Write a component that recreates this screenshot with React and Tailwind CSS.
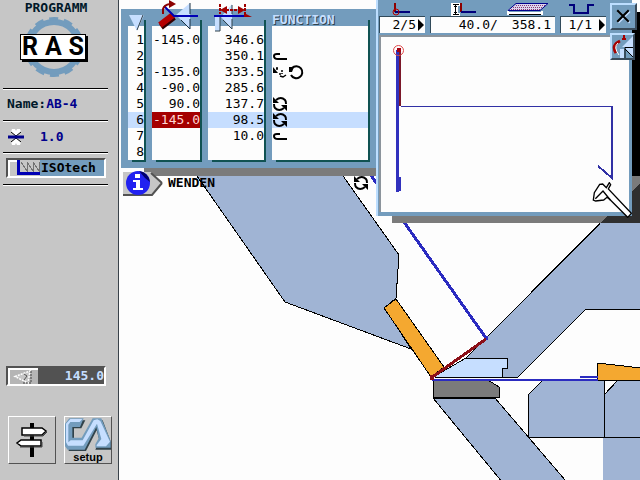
import React, { useState } from 'react'

const rows = [
  { n: 1, angle: '-145.0', stop: '346.6', fn: [] },
  { n: 2, angle: '', stop: '350.1', fn: ['hook'] },
  { n: 3, angle: '-135.0', stop: '333.5', fn: ['flip', 'rotate'] },
  { n: 4, angle: '-90.0', stop: '285.6', fn: [] },
  { n: 5, angle: '90.0', stop: '137.7', fn: ['turn'] },
  { n: 6, angle: '-145.0', stop: '98.5', fn: ['turn'] },
  { n: 7, angle: '', stop: '10.0', fn: ['hook'] },
  { n: 8, angle: '', stop: '', fn: [] },
]

function FnIcon({ kind }) {
  return (
    <svg className="w-4 h-4 block shrink-0" viewBox="0 0 16 16" fill="none" stroke="#000" strokeWidth="2">
      {kind === 'hook' && <path d="M8 6H5Q2 6 2 8Q2 11 6 11H15" />}
      {kind === 'flip' && (
        <>
          <path d="M1 3V9H6Z" fill="#000" stroke="none" />
          <path d="M5 3v2M4 5h2M9 7h2M7 10h2M8 12l3 1 3-2M10 9v1" strokeWidth="1.500" />
        </>
      )}
      {kind === 'rotate' && (
        <>
          <path d="M4 4A6 6 0 1 1 3 11" />
          <path d="M1 3h5L4 8H1Z" fill="#000" stroke="none" />
        </>
      )}
      {kind === 'turn' && (
        <>
          <path d="M4 4Q9 0 13 4Q14 5 14 8M12 12Q7 16 3 12Q2 11 2 8" />
          <path d="M1 1v6h6ZM15 15V9H9Z" fill="#000" stroke="none" />
        </>
      )}
    </svg>
  )
}

function Line() {
  return <hr className="h-0.5 shrink-0 border-0 border-t border-black bg-white ml-[3px] mr-2.5" />
}

function Sidebar() {
  return (
    <aside className="w-[119px] shrink-0 min-h-screen flex flex-col bg-[#c6c6c6] border-r border-[#39424a] pb-4">
      <h1 className="text-[13px] leading-4 font-bold text-[#001829] text-center pr-1.5">PROGRAMM</h1>
      <div className="grid h-[62px] mb-2.5 ml-5 w-[68px] items-center">
        <svg className="col-start-1 row-start-1 w-[68px] h-[62px]" viewBox="20 17 68 62">
          <circle cx="54" cy="48" r="25" fill="none" stroke="#739cbd" strokeWidth="6" />
          <circle cx="54" cy="48" r="28.500" fill="none" stroke="#739cbd" strokeWidth="3" strokeDasharray="9 5.920" strokeDashoffset="5" />
        </svg>
        <div className="col-start-1 row-start-1 h-[26px] w-[66px] border border-black bg-white shadow-[2px_2px_0_#000] px-px flex justify-between items-center text-[25px] leading-6 font-bold text-black font-['Roboto','Liberation_Sans',sans-serif]">
          <span>R</span>
          <span>A</span>
          <span>S</span>
        </div>
      </div>
      <Line />
      <p className="mt-1.5 mb-2 ml-[7px] text-[13px] leading-4 font-bold text-[#001829]">
        Name:<span className="text-[#00008c]">AB-4</span>
      </p>
      <Line />
      <div className="h-[30px] pl-2 flex items-center gap-4">
        <svg className="w-4 h-4" viewBox="0 0 16 16">
          <path d="M4 0h3l1 2 1-2h3l1 3-5 4-5-4ZM8 9l5 4-1 3H9l-1-2-1 2H4l-1-3Z" fill="#fff" />
          <path d="M3 3l5 4 5-4M3 13l5-4 5 4" stroke="#000" fill="none" />
          <path d="M0 8h16" stroke="#00008c" strokeWidth="3" />
        </svg>
        <span className="text-[13px] leading-4 font-bold text-[#00008c]">1.0</span>
      </div>
      <Line />
      <button className="mt-1 mb-1.5 mx-1.5 w-[100px] h-5 flex items-stretch border-2 border-t-[#525252] border-l-[#525252] border-b-white border-r-white bg-[#739cbd] text-left">
        <svg className="w-8 h-4 shrink-0" viewBox="8 160 32 16" shapeRendering="crispEdges">
          <path d="M8 160h32v16H8Z" fill="#c6c6c6" />
          <path d="M9 176V161h9" stroke="#fff" strokeWidth="2" fill="none" />
          <path d="M21 162l6 9v-9l6 9v-9l6 9v-9" stroke="#737373" fill="none" />
          <path d="M18 160v13.500h22" stroke="#0000b5" strokeWidth="3" fill="none" />
        </svg>
        <span className="pl-px text-[13px] leading-4 font-bold text-black">ISOtech</span>
      </button>
      <Line />
      <label className="mt-[180px] mx-1.5 w-[100px] h-5 flex border-2 border-t-[#525252] border-l-[#525252] border-b-white border-r-white bg-[#525252]">
        <svg className="w-[30px] h-4 shrink-0" viewBox="8 368 30 16">
          <path d="M8 368h30v16H8Z" fill="#b5b5b5" />
          <path d="M9 384V369h29" stroke="#fff" strokeWidth="2" fill="none" />
          <path d="M15 376.500L30 371L28 383Z" fill="#c6c6c6" stroke="#fff" strokeWidth="1.500" strokeDasharray="2 1" />
          <path d="M24 374l3 2-3 4" stroke="#525252" fill="none" />
          <path d="M31 371v12h-9" stroke="#424242" fill="none" strokeDasharray="2 1" />
        </svg>
        <input aria-label="Angle" className="min-w-0 flex-1 h-4 bg-transparent text-right text-[13px] leading-4 font-bold text-[#c6deff] outline-none" defaultValue="145.0" />
      </label>
      <div className="mt-[30px] ml-2 flex gap-2">
        <button aria-label="Navigation" className="w-12 h-12 border border-t-white border-l-white border-b-[#525252] border-r-[#525252]">
          <svg className="w-full h-full" viewBox="9 417 46 46">
            <path d="M32 423v34" stroke="#000" strokeWidth="4" />
            <path d="M22 428h20l4 3-4 4H22ZM41 440H21l-4 3 4 3h20Z" fill="#fff" stroke="#000" strokeWidth="1.500" />
            <path d="M24 436h19l4-4M20 447h22v-5" stroke="#424242" fill="none" />
          </svg>
        </button>
        <button className="w-12 h-12 border border-t-white border-l-white border-b-[#525252] border-r-[#525252] flex flex-col items-center">
          <svg className="w-full h-[34px] shrink-0" viewBox="195 186 138 102">
            <path d="M212 196H256L244 220H222V250H250L284 196H308L334 264V284H286L298 256L290 226L258 288H206Z" fill="#31424a" />
            <path d="M208 190H251L240 216H217V248H245L278 190H304L332 258V278H286V268L296 250L289 216L254 284H203L195 274V206Z" fill="#739cbd" />
            <path d="M211 192H247L239 201H211L205 209V262L212 256H248L281 196L292 193L301 198L330 260L318 274H290V270L304 252L291 206L250 272H204L198 262V206Z" fill="#c6deff" />
          </svg>
          <span className="text-[11px] leading-3 font-bold text-black font-['Liberation_Sans',sans-serif]">setup</span>
        </button>
      </div>
    </aside>
  )
}

function Machine() {
  return (
    <svg className="absolute inset-0 w-full h-full" viewBox="119 0 521 480" preserveAspectRatio="xMinYMin slice" shapeRendering="crispEdges">
      <g fill="#a0b4d4" stroke="#000">
        <path d="M190 166L285 302L411 349L385 308L396 298L399 255L336 166Z" />
        <path d="M486 338L649 174V309H586L518 377H440L466 358Z" />
        <path d="M433 398L512 494H577L495 398Z" />
        <path d="M543 380L528 395V437H604V380Z" />
        <path d="M618 380L604 395V437H650V380Z" />
        <path d="M603 438H650V490H603Z" stroke="none" />
        <path d="M433 380H488L499 387V397H433Z" fill="#7b7b7b" />
        <path d="M435 376L466 358H507V368H502V377H435Z" fill="#c6deff" />
        <path d="M384 308L396 299L444 367L431 377Z" fill="#f4a830" />
        <path d="M597 363L650 369V380H597Z" fill="#f4a830" />
      </g>
      <path d="M370 174L486 338" stroke="#2b2bc0" strokeWidth="3" />
      <path d="M484 336h4v4h-4Z" fill="#2b2bc0" />
      <path d="M432 380H598M580 377H598" stroke="#2b2bc0" strokeWidth="2" />
      <path d="M431 378L486 339" stroke="#8c1018" strokeWidth="3" />
      <path d="M430 375h4v5h-4Z" fill="#8c1018" />
      <path d="M144 167H376V176H144Z" fill="#7b7b7b" />
      <path d="M392 214H640V176H632V223H392Z" fill="#7b7b7b" />
      <path d="M640 183L600 223H640Z" fill="#2f2f2f" />
      <path d="M630 12H640V176H630Z" fill="#000" />
    </svg>
  )
}

function HeadCell({ label, children }) {
  return (
    <th className="relative p-0 font-normal">
      <div className="h-[11px]" />
      <div className="h-1.5 border-r-2 border-[#105252]" />
      <div className="h-1.5 border-r-2 border-[#105252] bg-[#fdfdfd]" />
      <span className="sr-only">{label}</span>
      {children}
    </th>
  )
}

function BendTable({ selected, onSelect }) {
  const cell = 'p-0 h-4 border-r-2 border-[#105252] text-right '
  return (
    <div className="relative mt-[9px] ml-0.5 w-[255px] pl-px pb-1.5 bg-[#739cbd]">
      <table className="table-fixed w-[254px] border-separate border-spacing-x-1.5 border-spacing-y-0 text-[13px] leading-4 text-black">
        <colgroup>
          <col className="w-[18px]" />
          <col className="w-[50px]" />
          <col className="w-[58px]" />
          <col />
        </colgroup>
        <thead>
          <tr>
            <HeadCell>
              <svg className="absolute left-0 top-1.5 w-4 h-4" viewBox="0 0 16 16">
                <path d="M1 0h15L9 16Z" fill="#c6deff" />
                <path d="M15 0L9 15" stroke="#31424a" />
              </svg>
            </HeadCell>
            <HeadCell>
              <svg className="absolute left-0 -top-[9px] w-12 h-8" viewBox="152 0 48 32">
                <path d="M190 3L176 15L190 29Z" fill="#c6deff" />
                <path d="M190 3V14M190 19V29L181 20" stroke="#183142" fill="none" />
                <path d="M161 27L174 17" stroke="#300" strokeWidth="6" />
                <path d="M160 25L173 15" stroke="#b50000" strokeWidth="6" />
                <path d="M164 6L174 16H198" stroke="#0000b5" strokeWidth="2" fill="none" />
                <path d="M163 14V9Q164 5 170 4" stroke="#8c0000" strokeWidth="2" fill="none" />
                <path d="M169 0L176 4L169 8Z" fill="#8c0000" />
              </svg>
            </HeadCell>
            <HeadCell>
              <svg className="absolute left-0 -top-[9px] w-14 h-8" viewBox="208 0 56 32">
                <path d="M215 17H220V31H215ZM221 17L232 29V4Z" fill="#c6deff" />
                <path d="M220 17V31H215M232 19V29L223 20M232 5V14" stroke="#31424a" fill="none" />
                <path d="M214 16H246" stroke="#0000b5" strokeWidth="2" />
                <path d="M244 13V17H252Z" fill="#a00000" />
                <path d="M220 4V14M245 4V14M222 10H242" stroke="#a00000" strokeWidth="2" strokeDasharray="3 1" />
                <path d="M220 10L227 6V14ZM245 10L238 6V14Z" fill="#a00000" />
              </svg>
            </HeadCell>
            <HeadCell>
              <span className="absolute left-0 top-[3px] leading-4 font-bold text-[#c6deff] [text-shadow:1px_1px_0_#31424a]">FUNCTION</span>
            </HeadCell>
          </tr>
        </thead>
        <tbody>
          {rows.map((r) => {
            const bg = r.n === selected ? 'bg-[#c6deff]' : 'bg-[#fdfdfd]'
            return (
              <tr key={r.n} onClick={() => onSelect(r.n)}>
                <td className={cell + bg}>{r.n}</td>
                <td className={cell + (r.n === selected ? 'bg-[#a50000] text-[#ffd6d6]' : bg)}>{r.angle}</td>
                <td className={cell + bg}>{r.stop}</td>
                <td className={cell + bg}>
                  <div className="flex">{r.fn.map((k) => <FnIcon key={k} kind={k} />)}</div>
                </td>
              </tr>
            )
          })}
        </tbody>
        <tfoot>
          <tr>
            {[0, 1, 2, 3].map((i) => (
              <td key={i} className="p-0"><div className="ml-1 h-0.5 bg-[#105252]" /></td>
            ))}
          </tr>
        </tfoot>
      </table>
    </div>
  )
}

function Value({ className, icon, children }) {
  return (
    <div className={className}>
      <div className="h-[15px]">{icon}</div>
      <div className="h-[17px] border-t border-l border-[#314a5a] bg-[#fdfdfd] text-[13px] leading-4 text-black flex items-center justify-end whitespace-pre">
        {children}
      </div>
    </div>
  )
}

function Arrow() {
  return (
    <svg className="w-2 h-3 ml-px" viewBox="0 0 8 12"><path d="M1 0L7 6L1 12Z" fill="#000" /></svg>
  )
}

function Preview() {
  return (
    <section className="absolute left-[257px] right-2 top-0 h-[216px] flex flex-col bg-[#739cbd] border-l-2 border-[#bddeff] pt-px pl-px pr-[3px] pb-1">
      <div className="flex gap-[5px] pr-[23px] pb-0.5">
        <Value
          className="w-[46px]"
          icon={
            <svg className="w-5 h-[15px] ml-3" viewBox="391 1 20 15">
              <path d="M395 3V12" stroke="#8c0000" strokeWidth="2" />
              <path d="M395 12H410" stroke="#00007b" strokeWidth="2" />
              <circle cx="396" cy="12" r="3" fill="none" stroke="#b50000" />
            </svg>
          }
        >
          2/5<Arrow />
        </Value>
        <Value
          className="flex-1"
          icon={
            <div className="flex justify-between pr-1.5">
              <svg className="w-7 h-[15px] ml-5" viewBox="450 1 28 15" shapeRendering="crispEdges">
                <path d="M451 3h9v3h-2v7h2v3h-9Z" fill="#fff" />
                <path d="M453 4.500h6M453 14.500h6M455.500 5v9M454 6.500h3M454 12.500h3" stroke="#000" fill="none" />
                <path d="M461 3V12" stroke="#8c0000" strokeWidth="2" />
                <path d="M461 12H476" stroke="#00007b" strokeWidth="2" />
              </svg>
              <svg className="w-[42px] h-[15px]" viewBox="507 1 42 15">
                <path d="M516 4H548L540 10H508Z" fill="#dcd6ee" />
                <path d="M516 5.500H546M513 7.500H543M511 9.500H540" stroke="#8c3973" strokeDasharray="1 1" />
                <path d="M516 3.500H548L540 10.500H508Z" fill="none" stroke="#00008c" />
                <path d="M508 11V15M542 11V15M508 13H542" stroke="#fff" strokeWidth="2" />
                <path d="M509 14.500H541" stroke="#000" />
              </svg>
            </div>
          }
        >
          <span>40.0/</span><span className="ml-3.5 mr-1">358.1</span>
        </Value>
        <Value
          className="w-[46px]"
          icon={
            <svg className="w-7 h-[15px] ml-2" viewBox="567 1 28 15">
              <path d="M568 5H573V13H587V5H593" stroke="#00007b" strokeWidth="2" fill="none" />
            </svg>
          }
        >
          1/1<span className="w-[5px]" /><Arrow />
        </Value>
      </div>
      <div className="flex-1 min-h-0 border-t-2 border-l-2 border-[#8c949c] bg-[#fdfdfd]">
        <svg className="w-full h-full" viewBox="381 37 248 175" fill="none" strokeWidth="2" shapeRendering="crispEdges">
          <path d="M397.500 50V192" stroke="#3131bd" strokeWidth="3" />
          <path d="M400 177V191" stroke="#3131bd" />
          <path d="M401 106.500H612" stroke="#3131a5" strokeWidth="1" />
          <path d="M612 106V178L598 166" stroke="#3131a5" />
          <path d="M400 50V106" stroke="#7b1829" />
          <path d="M397 48h4v4h-4Z" fill="#a50010" />
          <circle cx="398.500" cy="50.500" r="5" stroke="#e04a4a" strokeWidth="1" shapeRendering="auto" />
        </svg>
      </div>
      <button aria-label="Close" className="absolute -right-[5px] top-[3px] w-[27px] h-[27px] border-2 border-t-[#bddeff] border-l-[#bddeff] border-b-[#394a5a] border-r-[#394a5a] bg-[#739cbd]">
        <svg className="w-full h-full" viewBox="0 0 22 22">
          <path d="M6 6L17 17M17 6L6 17" stroke="#c6deff" strokeWidth="2" />
          <path d="M5 5L16 16M16 5L5 16" stroke="#000" strokeWidth="2" />
        </svg>
      </button>
      <button aria-label="Bend view" className="absolute -right-[3px] top-[33px] w-[25px] h-[27px] border-2 border-t-[#bddeff] border-l-[#bddeff] border-b-[#394a5a] border-r-[#394a5a] bg-[#739cbd]">
        <svg className="w-full h-full" viewBox="612 35 21 23">
          <path d="M633 36L622 47H633ZM625 48L633 57V48ZM620 49h4v9h-4Z" fill="#c6deff" />
          <path d="M625 58V47.500H633M625 49L633 57" stroke="#000" fill="none" />
          <path d="M620 41Q611 45 616 53" stroke="#a50000" strokeWidth="3" fill="none" />
          <path d="M618 43Q613 47 619 55" stroke="#fff" fill="none" />
          <path d="M624 35v5M622 39h4" stroke="#a50000" strokeWidth="2" />
        </svg>
      </button>
      <button aria-label="Measure" className="absolute right-0 -bottom-0.5 w-10 h-9">
        <svg className="w-full h-full" viewBox="645 546 120 108">
          <path d="M649 600L652 578L668 553L677 552L688 563L697 548L701 554L694 567L763 640L752 652L698 598L690 592L680 600L656 603Z" fill="#fff" stroke="#000" strokeWidth="4" />
          <path d="M655 596L678 573L700 600" fill="none" stroke="#000" strokeWidth="4" />
        </svg>
      </button>
    </section>
  )
}

export default function App() {
  const [selected, setSelected] = useState(6)

  return (
    <div className="min-h-screen flex bg-[#fdfdfd] font-['DejaVu_Sans_Mono','Liberation_Mono',monospace]">
      <Sidebar />
      <main className="relative flex-1 min-w-0 flex flex-col overflow-hidden">
        <Machine />
        <BendTable selected={selected} onSelect={setSelected} />
        <div className="relative mt-0.5 ml-1 w-[246px] flex items-center">
          <button aria-label="Info" className="w-10 h-[26px]">
            <svg className="w-full h-full" viewBox="123 169 40 26">
              <path d="M123 171H151L162 182L152 194H123Z" fill="#c6c6c6" />
              <path d="M162 182L152 194H123M151 172L162 182" stroke="#525252" strokeWidth="2" fill="none" />
              <circle cx="138" cy="182" r="12" fill="#2121f0" />
              <path d="M139 170A12 12 0 0 1 150 181L145 177Z" fill="#00006b" />
              <path d="M135 173h5v4h-5ZM133 179h7v8h3v2h-10v-2h3v-6h-3Z" fill="#fff" />
            </svg>
          </button>
          <span className="ml-[5px] text-[13px] leading-4 font-bold text-black">WENDEN</span>
          <span className="ml-auto"><FnIcon kind="turn" /></span>
        </div>
        <Preview />
      </main>
    </div>
  )
}
